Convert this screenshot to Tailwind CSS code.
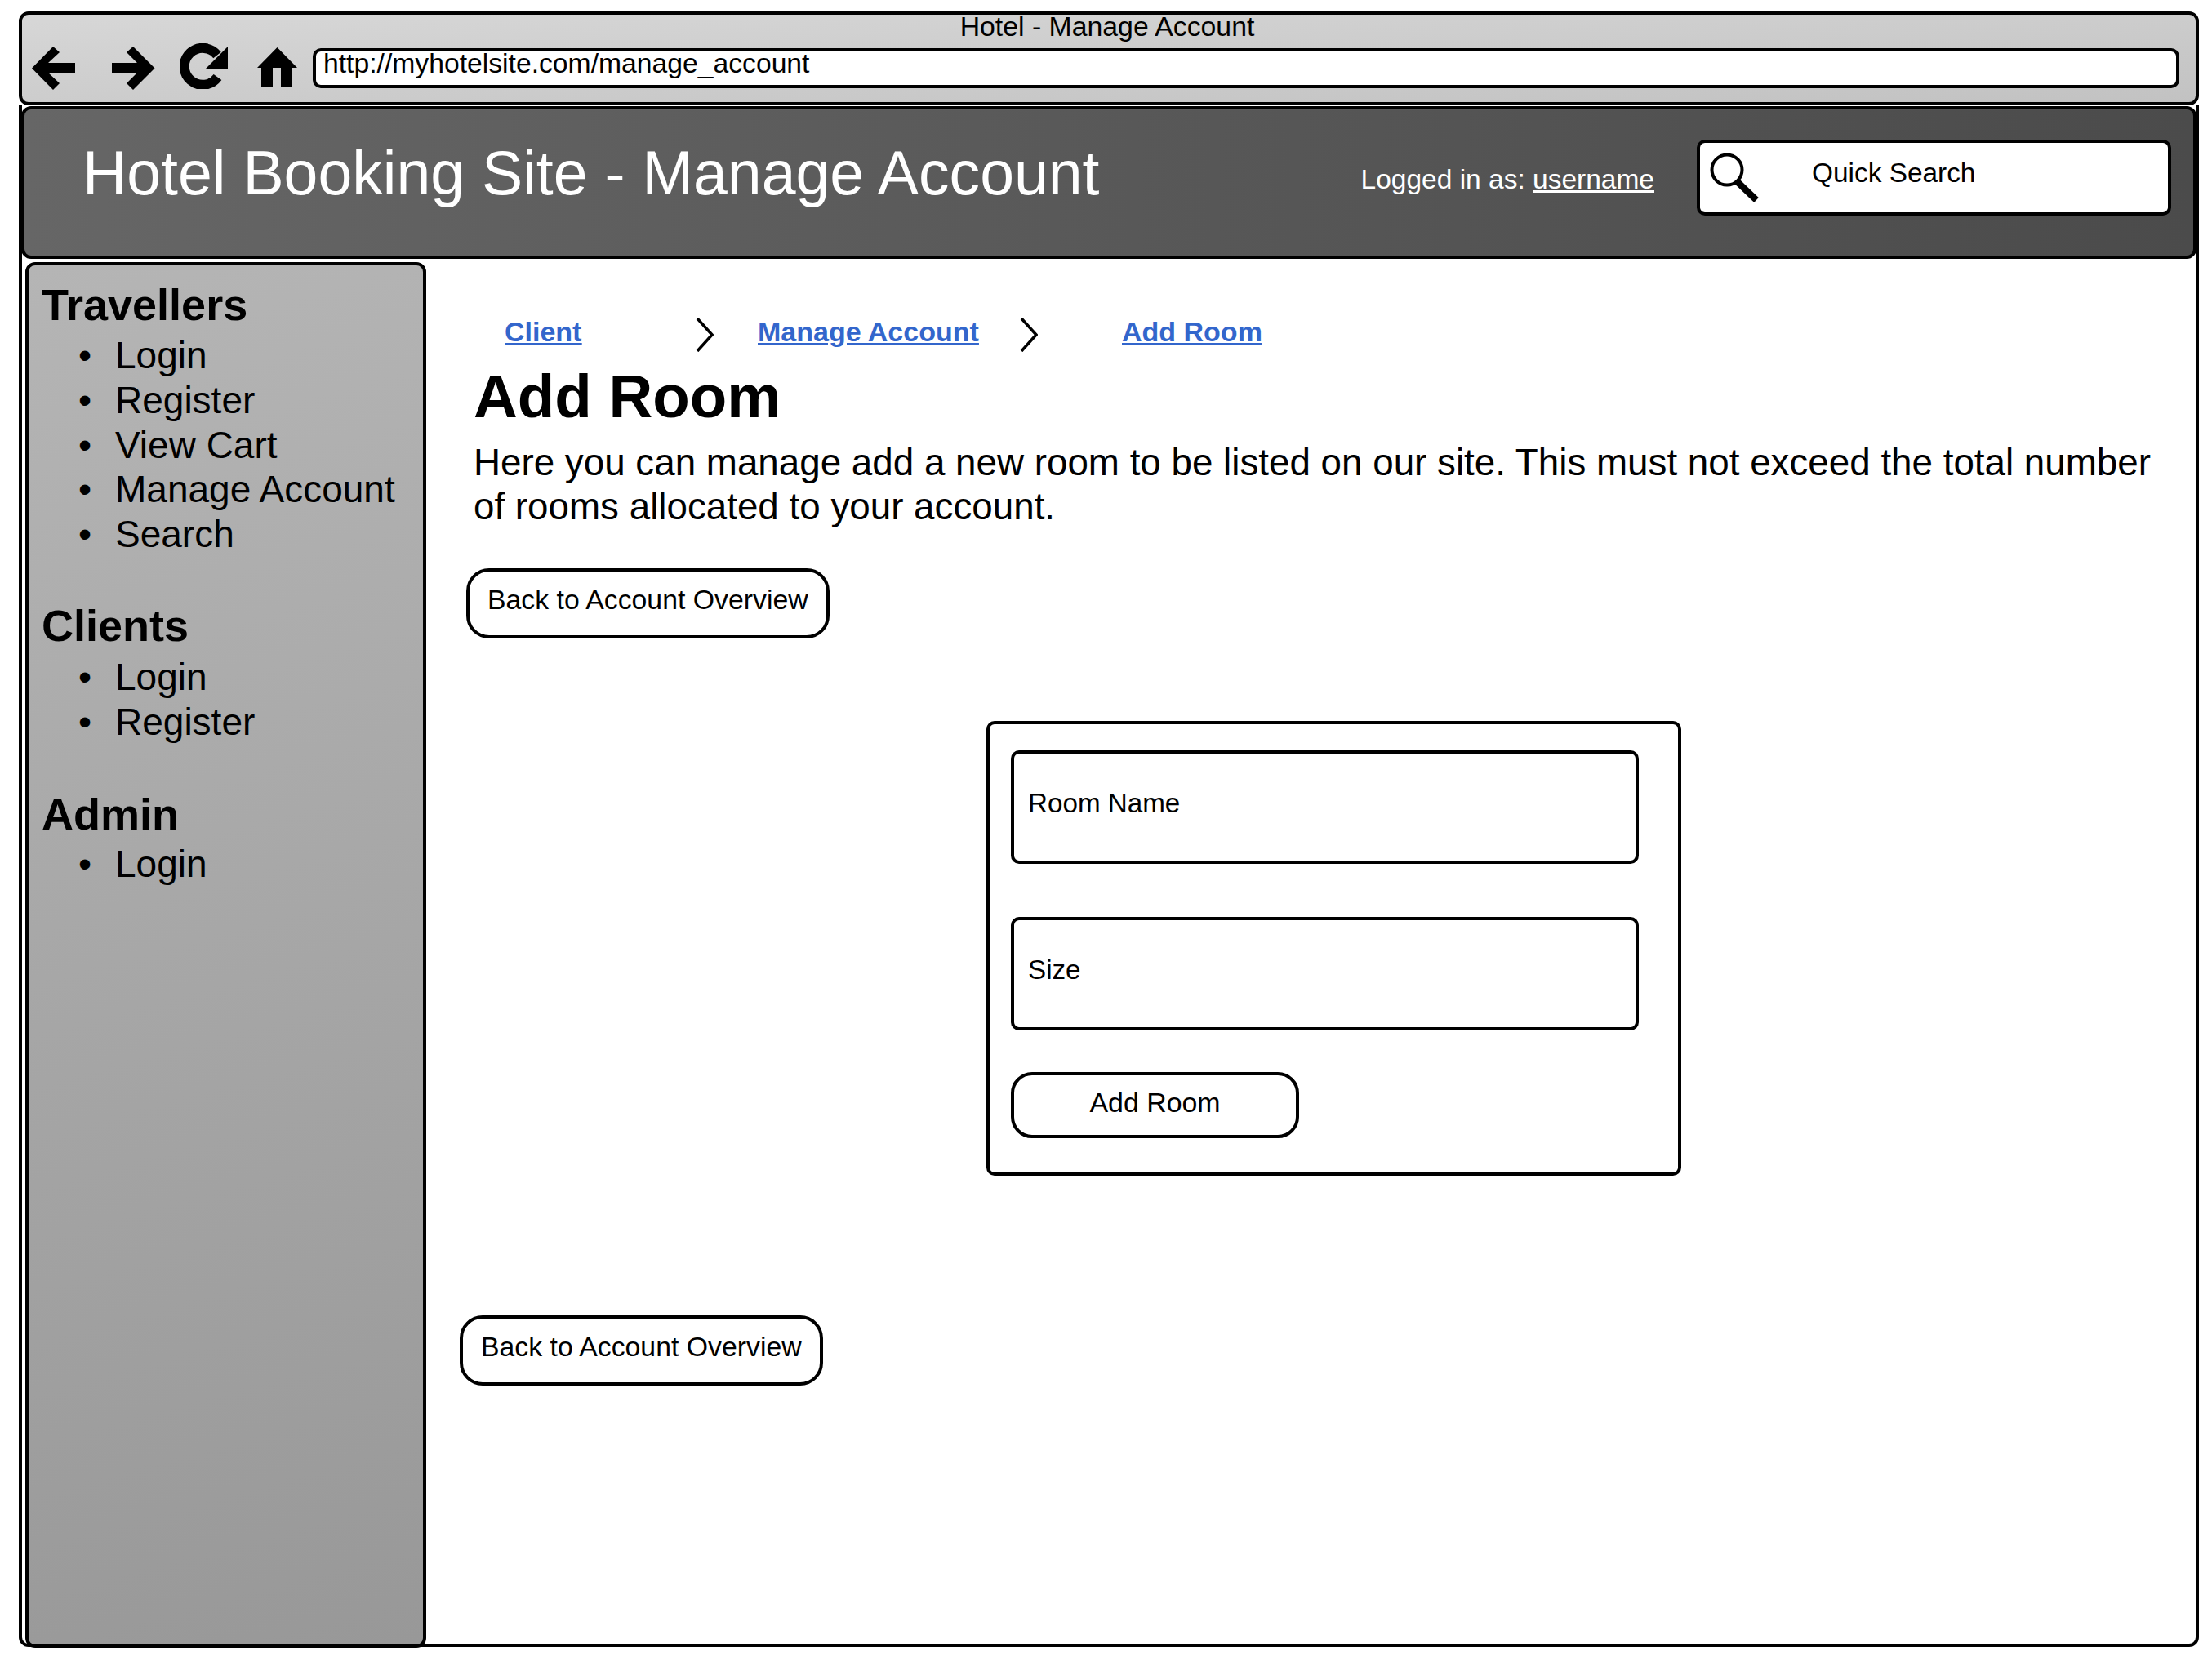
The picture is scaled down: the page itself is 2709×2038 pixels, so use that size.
<!DOCTYPE html>
<html lang="en">
<head>
  <meta charset="UTF-8">
  <title>Hotel - Manage Account</title>
  <script src="https://cdn.jsdelivr.net/npm/@tailwindcss/browser@4"></script>
</head>
<body class="bg-white font-['Liberation_Sans',Arial,sans-serif] text-black">
  <div class="w-[2709px] h-[2038px] pt-[14px] pl-[23px] overflow-hidden">

    <!-- browser chrome -->
    <div class="w-[2670px] h-[115px] border-[4px] border-black rounded-[12px] bg-gradient-to-br from-[#d7d7d7] to-[#c2c2c2]">
      <div class="h-[37px] text-center text-[33.8px] leading-[29px] pr-[4px]">Hotel - Manage Account</div>
      <div class="flex items-center h-[56px] pl-[12px]">
        <svg class="w-[53px] h-[53px] shrink-0" viewBox="0 0 53 53"><path d="M0 26.5 26 0 34 7 20 20H53V32H20L34 45 26 53Z" fill="#000"/></svg>
        <svg class="w-[53px] h-[53px] shrink-0 ml-[45px]" viewBox="0 0 53 53"><path d="M52.5 26.5 26 0 18 7 31 20H0V32H31L18 45 26 53Z" fill="#000"/></svg>
        <svg class="w-[60px] h-[56px] shrink-0 ml-[30px] mb-[4px]" viewBox="0 0 60 56"><path d="M46.5 41.5A22.5 22.5 0 1 1 46 14.5" fill="none" stroke="#000" stroke-width="12"/><path d="M59 4V31H32Z" fill="#000"/></svg>
        <svg class="w-[49px] h-[48px] shrink-0 ml-[35px] mb-[2px]" viewBox="0 0 49 48"><path d="M24.5 0 49 25H43V48H29V25H19V48H5V25H0Z" fill="#000"/></svg>
        <div class="w-[2286px] h-[49px] ml-[19px] border-[4px] border-black rounded-[10px] bg-white pl-[9px] text-[33.7px] leading-[28px] whitespace-nowrap">http://myhotelsite.com/manage_account</div>
      </div>
    </div>

    <!-- page frame -->
    <div class="w-[2670px] h-[1888px] border-[4px] border-t-0 border-black rounded-b-[12px] flex flex-col">
      <header class="h-[187px] -mx-px mt-[1px] border-[4px] border-black rounded-[12px] bg-gradient-to-r from-[#666666] to-[#4b4b4b] flex text-white shrink-0">
        <h1 class="ml-[71px] mt-[38px] text-[75.2px] leading-[80px] font-normal whitespace-nowrap">Hotel Booking Site - Manage Account</h1>
        <div class="ml-auto mt-[66px] text-[33.5px] leading-[40px] whitespace-nowrap">Logged in as: <a class="underline">username</a></div>
        <div class="w-[581px] h-[93px] ml-[52px] mr-[27px] mt-[37px] border-[4px] border-black rounded-[10px] bg-white text-black flex">
          <svg class="w-[60px] h-[60px] ml-[12px] mt-[12px] shrink-0" viewBox="0 0 60 60"><circle cx="21" cy="21" r="18.5" fill="#fff" stroke="#000" stroke-width="4"/><path d="M33 35 57 58" stroke="#000" stroke-width="8"/></svg>
          <span class="ml-[65px] mt-[17px] text-[33.4px] leading-[40px]">Quick Search</span>
        </div>
      </header>

      <div class="flex flex-1 min-h-0 pt-[4px]">
        <!-- left nav -->
        <aside class="w-[491px] h-[1697px] ml-[4px] border-[4px] border-black rounded-[12px] bg-[linear-gradient(165deg,#b5b5b5,#989898)] pl-[16px] pt-[21px] shrink-0">
          <h2 class="text-[54px] leading-[54px] font-bold">Travellers</h2>
          <ul class="mt-[8px] text-[46px] leading-[54.8px]">
            <li class="flex"><span class="w-[90px] pl-[45px] shrink-0">•</span>Login</li>
            <li class="flex"><span class="w-[90px] pl-[45px] shrink-0">•</span>Register</li>
            <li class="flex"><span class="w-[90px] pl-[45px] shrink-0">•</span>View Cart</li>
            <li class="flex whitespace-nowrap"><span class="w-[90px] pl-[45px] shrink-0">•</span>Manage Account</li>
            <li class="flex"><span class="w-[90px] pl-[45px] shrink-0">•</span>Search</li>
          </ul>
          <h2 class="mt-[57px] text-[54px] leading-[54px] font-bold">Clients</h2>
          <ul class="mt-[9px] text-[46px] leading-[55px]">
            <li class="flex"><span class="w-[90px] pl-[45px] shrink-0">•</span>Login</li>
            <li class="flex"><span class="w-[90px] pl-[45px] shrink-0">•</span>Register</li>
          </ul>
          <h2 class="mt-[58px] text-[54px] leading-[54px] font-bold">Admin</h2>
          <ul class="mt-[7px] text-[46px] leading-[55px]">
            <li class="flex"><span class="w-[90px] pl-[45px] shrink-0">•</span>Login</li>
          </ul>
        </aside>

        <!-- content -->
        <main class="flex-1 min-w-0 flex flex-col items-start">
          <nav class="flex items-center h-[40px] mt-[65px] text-[34px] font-bold text-[#3366cc] underline whitespace-nowrap">
            <a class="ml-[96px] w-[234px]">Client</a>
            <svg class="w-[22px] h-[42px] shrink-0 mt-[7px]" viewBox="0 0 22 42"><path d="M2 1 20 21 2 41" fill="none" stroke="#000" stroke-width="3.5"/></svg>
            <a class="ml-[54px] w-[321px]">Manage Account</a>
            <svg class="w-[22px] h-[42px] shrink-0 mt-[7px]" viewBox="0 0 22 42"><path d="M2 1 20 21 2 41" fill="none" stroke="#000" stroke-width="3.5"/></svg>
            <a class="ml-[103px]">Add Room</a>
          </nav>
          <h2 class="ml-[58px] mt-[17px] text-[74.5px] leading-[86px] font-bold">Add Room</h2>
          <p class="ml-[58px] mt-[11px] w-[2090px] text-[45.75px] leading-[54.4px]">Here you can manage add a new room to be listed on our site. This must not exceed the total number of rooms allocated to your account.</p>
          <a class="ml-[49px] mt-[47px] w-[445px] h-[86px] border-[4px] border-black rounded-[28px] pl-[22px] pt-[12px] text-[33.8px] leading-[44px] whitespace-nowrap">Back to Account Overview</a>

          <form class="ml-[686px] mt-[101px] w-[851px] h-[557px] border-[4px] border-black rounded-[10px] pl-[26px] pt-[32px]">
            <div class="w-[769px] h-[139px] border-[4px] border-black rounded-[10px] pl-[17px] pt-[39px] text-[33.2px] leading-[44px]">Room Name</div>
            <div class="w-[769px] h-[139px] mt-[65px] border-[4px] border-black rounded-[10px] pl-[17px] pt-[39px] text-[33.2px] leading-[44px]">Size</div>
            <button type="button" class="block w-[353px] h-[81px] mt-[51px] border-[4px] border-black rounded-[26px] pb-[6px] text-[33.9px] leading-[44px] text-center">Add Room</button>
          </form>

          <a class="ml-[41px] mt-[171px] w-[445px] h-[86px] border-[4px] border-black rounded-[28px] pl-[22px] pt-[12px] text-[33.8px] leading-[44px] whitespace-nowrap">Back to Account Overview</a>
        </main>
      </div>
    </div>
  </div>
</body>
</html>
